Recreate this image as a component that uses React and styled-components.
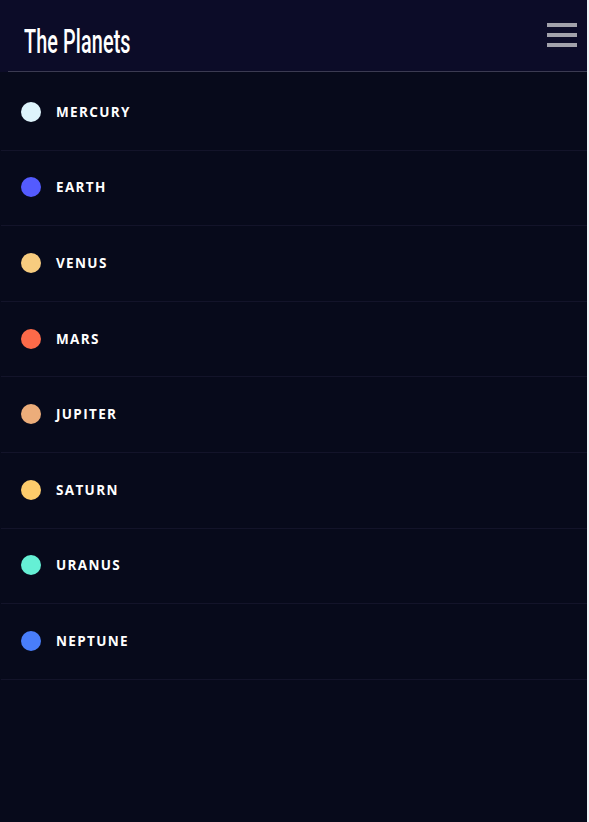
import React from 'react';
import styled, { createGlobalStyle } from 'styled-components';

const GlobalStyle = createGlobalStyle`
  html, body {
    margin: 0;
    padding: 0;
    background-color: #eef2f6;
  }
  * {
    box-sizing: border-box;
  }
`;

const Page = styled.div`
  width: 587px;
  height: 822px;
  display: flex;
  flex-direction: column;
  background-color: #070a1b;
`;

const Header = styled.header`
  display: flex;
  align-items: center;
  justify-content: space-between;
  height: 72px;
  padding: 0 10px 0 24px;
  background-color: #0c0c28;
  position: relative;

  &::after {
    content: '';
    position: absolute;
    left: 8px;
    right: 0;
    bottom: 0;
    height: 1px;
    background-color: #3b3b52;
  }
`;

const Logo = styled.h1`
  margin: 10px 0 0;
  font-family: 'Roboto', 'Liberation Sans', sans-serif;
  font-size: 33px;
  font-weight: 500;
  line-height: 1;
  color: #ffffff;
  letter-spacing: 0.2px;
  transform: scaleX(0.6);
  transform-origin: left center;
  white-space: nowrap;
`;

const MenuButton = styled.button`
  display: flex;
  flex-direction: column;
  gap: 6px;
  padding: 0;
  margin-bottom: 2px;
  border: none;
  background: none;
  cursor: pointer;
`;

const MenuBar = styled.span`
  display: block;
  width: 30px;
  height: 4px;
  background-color: #a2a2ab;
`;

const List = styled.ul`
  list-style: none;
  margin: 0 0 0 1px;
  padding: 3px 0 0;
  background-color: #070a1b;
  flex: 1;
`;

const Item = styled.li`
  display: flex;
  align-items: center;
  gap: 15px;
  height: 75.6px;
  padding: 0 0 1px 20px;
  border-bottom: 1px solid #13142a;
`;

const Dot = styled.span`
  width: 20px;
  height: 20px;
  border-radius: 50%;
  background-color: ${(p) => p.color};
`;

const Name = styled.span`
  font-family: 'Open Sans', sans-serif;
  font-size: 13.5px;
  font-weight: 700;
  letter-spacing: 1.35px;
  color: #ffffff;
`;

const planets = [
  { name: 'Mercury', color: '#def4fc' },
  { name: 'Earth', color: '#545bfe' },
  { name: 'Venus', color: '#f7cc7f' },
  { name: 'Mars', color: '#fc6a49' },
  { name: 'Jupiter', color: '#ecad7a' },
  { name: 'Saturn', color: '#fccb6b' },
  { name: 'Uranus', color: '#65f0d5' },
  { name: 'Neptune', color: '#497efa' },
];

const App = () => (
  <>
    <GlobalStyle />
    <Page>
      <Header>
        <Logo>The Planets</Logo>
        <MenuButton aria-label="Menu">
          <MenuBar />
          <MenuBar />
          <MenuBar />
        </MenuButton>
      </Header>
      <List>
        {planets.map((p) => (
          <Item key={p.name}>
            <Dot color={p.color} />
            <Name>{p.name.toUpperCase()}</Name>
          </Item>
        ))}
      </List>
    </Page>
  </>
);

export default App;
